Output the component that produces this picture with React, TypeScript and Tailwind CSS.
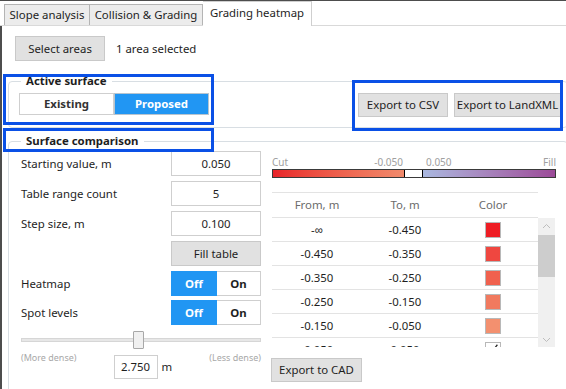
import React from 'react';

const rows = [
  { from: '-∞', to: '-0.450', color: '#ee1d24' },
  { from: '-0.450', to: '-0.350', color: '#ef4740' },
  { from: '-0.350', to: '-0.250', color: '#f0614e' },
  { from: '-0.250', to: '-0.150', color: '#f17a5f' },
  { from: '-0.150', to: '-0.050', color: '#f3906f' },
  { from: '-0.050', to: '0.050', color: '' },
];

function Field({ label, value }: { label: string; value: string }) {
  return (
    <div className="flex items-center justify-between h-[25px]">
      <span>{label}</span>
      <div className="w-[90px] h-[25px] border border-[#cfcfcf] flex items-center justify-center">{value}</div>
    </div>
  );
}

function OffOn({ label }: { label: string }) {
  return (
    <div className="flex items-center justify-between h-[25px]">
      <span>{label}</span>
      <div className="flex w-[90px] h-[25px] font-bold">
        <div className="w-[46px] bg-[#2196f3] text-white flex items-center justify-center">Off</div>
        <div className="flex-1 border border-l-0 border-[#cfcfcf] flex items-center justify-center">On</div>
      </div>
    </div>
  );
}

export default function App() {
  return (
    <div className="relative w-[566px] h-[389px] overflow-hidden bg-white border-t border-[#4d4d4d] font-['Noto_Sans',sans-serif] text-[11.4px] text-[#1e1e1e] whitespace-nowrap">
      {/* Tabs */}
      <div className="flex items-end h-[25px] pl-[4px] border-b border-[#d9d9d9]">
        <div className="w-[86px] h-[21px] bg-[#ececec] border border-b-0 border-[#b4b4b4] flex items-center justify-center">Slope analysis</div>
        <div className="w-[113px] h-[21px] bg-[#ececec] border border-b-0 border-l-0 border-[#b4b4b4] flex items-center justify-center">Collision &amp; Grading</div>
        <div className="w-[109px] h-[25px] -mb-px bg-white border border-b-0 border-l-0 border-[#cfcfcf] flex items-center justify-center pb-[2px]">Grading heatmap</div>
      </div>

      <div className="h-[363px] border-l-2 border-[#4d4d4d]">
        {/* Select areas */}
        <div className="flex items-center pt-[10px] pl-[13px] gap-[11px]">
          <button className="w-[90px] h-[25px] bg-[#e1e1e1] border border-[#c9c9c9]">Select areas</button>
          <span>1 area selected</span>
        </div>

        {/* Active surface */}
        <fieldset className="ml-[6px] mt-[12px] w-[560px] border border-[#d8dee3] rounded-[4px]">
          <legend className="ml-[12px] px-[5px] font-bold leading-[16px]">Active surface</legend>
          <div className="flex items-start pt-[4px] pb-[10px] pl-[10px]">
            <div className="flex w-[190px] h-[22px] font-bold">
              <div className="w-[95px] border border-[#cfcfcf] flex items-center justify-center text-[#333]">Existing</div>
              <div className="flex-1 bg-[#2196f3] border border-[#b7c4cf] text-white flex items-center justify-center">Proposed</div>
            </div>
            <div className="ml-auto mr-[6px] flex gap-[6px]">
              <button className="w-[90px] h-[24px] bg-[#e1e1e1] border border-[#c9c9c9]">Export to CSV</button>
              <button className="w-[107px] h-[24px] bg-[#e1e1e1] border border-[#c9c9c9]">Export to LandXML</button>
            </div>
          </div>
        </fieldset>

        {/* Surface comparison */}
        <fieldset className="ml-[6px] mt-[5px] w-[560px] h-[260px] border border-[#d8dee3] rounded-[4px]">
          <legend className="ml-[12px] px-[5px] font-bold leading-[16px]">Surface comparison</legend>
          <div className="flex pl-[12px] pt-[2px]">
            {/* Left column */}
            <div className="w-[240px] flex flex-col">
              <div className="flex flex-col gap-[5px]">
                <Field label="Starting value, m" value="0.050" />
                <Field label="Table range count" value="5" />
                <Field label="Step size, m" value="0.100" />
                <div className="flex justify-end">
                  <button className="w-[90px] h-[25px] bg-[#e1e1e1] border border-[#c9c9c9]">Fill table</button>
                </div>
              </div>
              <div className="flex flex-col gap-[4px] mt-[5px]">
                <OffOn label="Heatmap" />
                <OffOn label="Spot levels" />
              </div>
              {/* Slider */}
              <div className="relative h-[18px] mt-[6px] flex items-center">
                <div className="w-full h-[4px] bg-[#e7e7e7] border border-[#d6d6d6]" />
                <div className="absolute left-[112px] top-0 w-[11px] h-[18px] bg-[#f0f0f0] border border-[#a8a8a8] rounded-[1px]" />
              </div>
              <div className="flex justify-between items-start mt-[4px] text-[9px] leading-[10px] text-[#a8a8a8]">
                <span>(More dense)</span>
                <div className="flex items-center gap-[4px] mt-[2px] text-[11.4px] text-[#1e1e1e]">
                  <div className="w-[44px] h-[24px] border border-[#cfcfcf] flex items-center justify-center">2.750</div>
                  <span>m</span>
                </div>
                <span>(Less dense)</span>
              </div>
            </div>

            {/* Right column */}
            <div className="ml-[11px] w-[284px] flex flex-col">
              <div className="flex mt-[5px] text-[10px] leading-[12px] text-[#a0a0a0]">
                <div className="w-[132px] flex justify-between pr-[1px]"><span>Cut</span><span>-0.050</span></div>
                <div className="w-[19px]" />
                <div className="flex-1 flex justify-between pl-[3px]"><span>0.050</span><span>Fill</span></div>
              </div>
              <div className="flex h-[9px] mt-[1px] border border-[#3a3a3a]">
                <div className="w-[131px] bg-linear-to-r from-[#e8222a] to-[#f08a6c]" />
                <div className="w-[19px] bg-white border-x border-black" />
                <div className="flex-1 bg-linear-to-r from-[#a9b8e0] to-[#9b4a98]" />
              </div>

              {/* Table */}
              <div className="mt-[14px] w-[266px] border-t border-[#e3e3e3]">
                <div className="grid grid-cols-[90px_86px_90px] h-[25px] items-center text-center text-[#6b6b6b] border-b border-[#e3e3e3]">
                  <span>From, m</span>
                  <span>To, m</span>
                  <span>Color</span>
                </div>
              </div>
              <div className="flex h-[129px] overflow-hidden">
                <div className="w-[266px]">
                  {rows.map((r) => (
                    <div key={r.from} className="grid grid-cols-[90px_86px_90px] h-[24px] items-center text-center border-b border-[#e3e3e3]">
                      <span>{r.from}</span>
                      <span>{r.to}</span>
                      <div className="flex justify-center">
                        {r.color ? (
                          <div className="w-[16px] h-[16px] border border-[#b8b8b8]" style={{ backgroundColor: r.color }} />
                        ) : (
                          <svg width="16" height="16" viewBox="0 0 16 16" className="border border-[#b8b8b8] bg-white">
                            <path d="M9 7 L13 2" stroke="#222" strokeWidth="1.4" />
                          </svg>
                        )}
                      </div>
                    </div>
                  ))}
                </div>
                <div className="w-[17px] h-[129px] bg-[#f0f0f0] flex flex-col items-center">
                  <svg width="17" height="17" viewBox="0 0 17 17">
                    <path d="M5 10 L8.5 6.5 L12 10" fill="none" stroke="#bdbdbd" strokeWidth="1" />
                  </svg>
                  <div className="w-[17px] h-[42px] bg-[#cdcdcd]" />
                  <div className="flex-1" />
                  <svg width="17" height="12" viewBox="0 0 17 12">
                    <path d="M5 3 L8.5 6.5 L12 3" fill="none" stroke="#bdbdbd" strokeWidth="1" />
                  </svg>
                </div>
              </div>
              <div className="mt-[11px]">
                <button className="w-[91px] h-[24px] -ml-[1px] bg-[#e1e1e1] border border-[#c9c9c9]">Export to CAD</button>
              </div>
            </div>
          </div>
        </fieldset>
      </div>

      {/* Annotation highlights */}
      <div className="absolute left-[3px] top-[73px] w-[211px] h-[51px] border-[3px] border-[#0a50e6]" />
      <div className="absolute left-[3px] top-[127px] w-[211px] h-[24px] border-[3px] border-[#0a50e6]" />
      <div className="absolute left-[352px] top-[79px] w-[211px] h-[51px] border-[3px] border-[#0a50e6]" />
    </div>
  );
}
